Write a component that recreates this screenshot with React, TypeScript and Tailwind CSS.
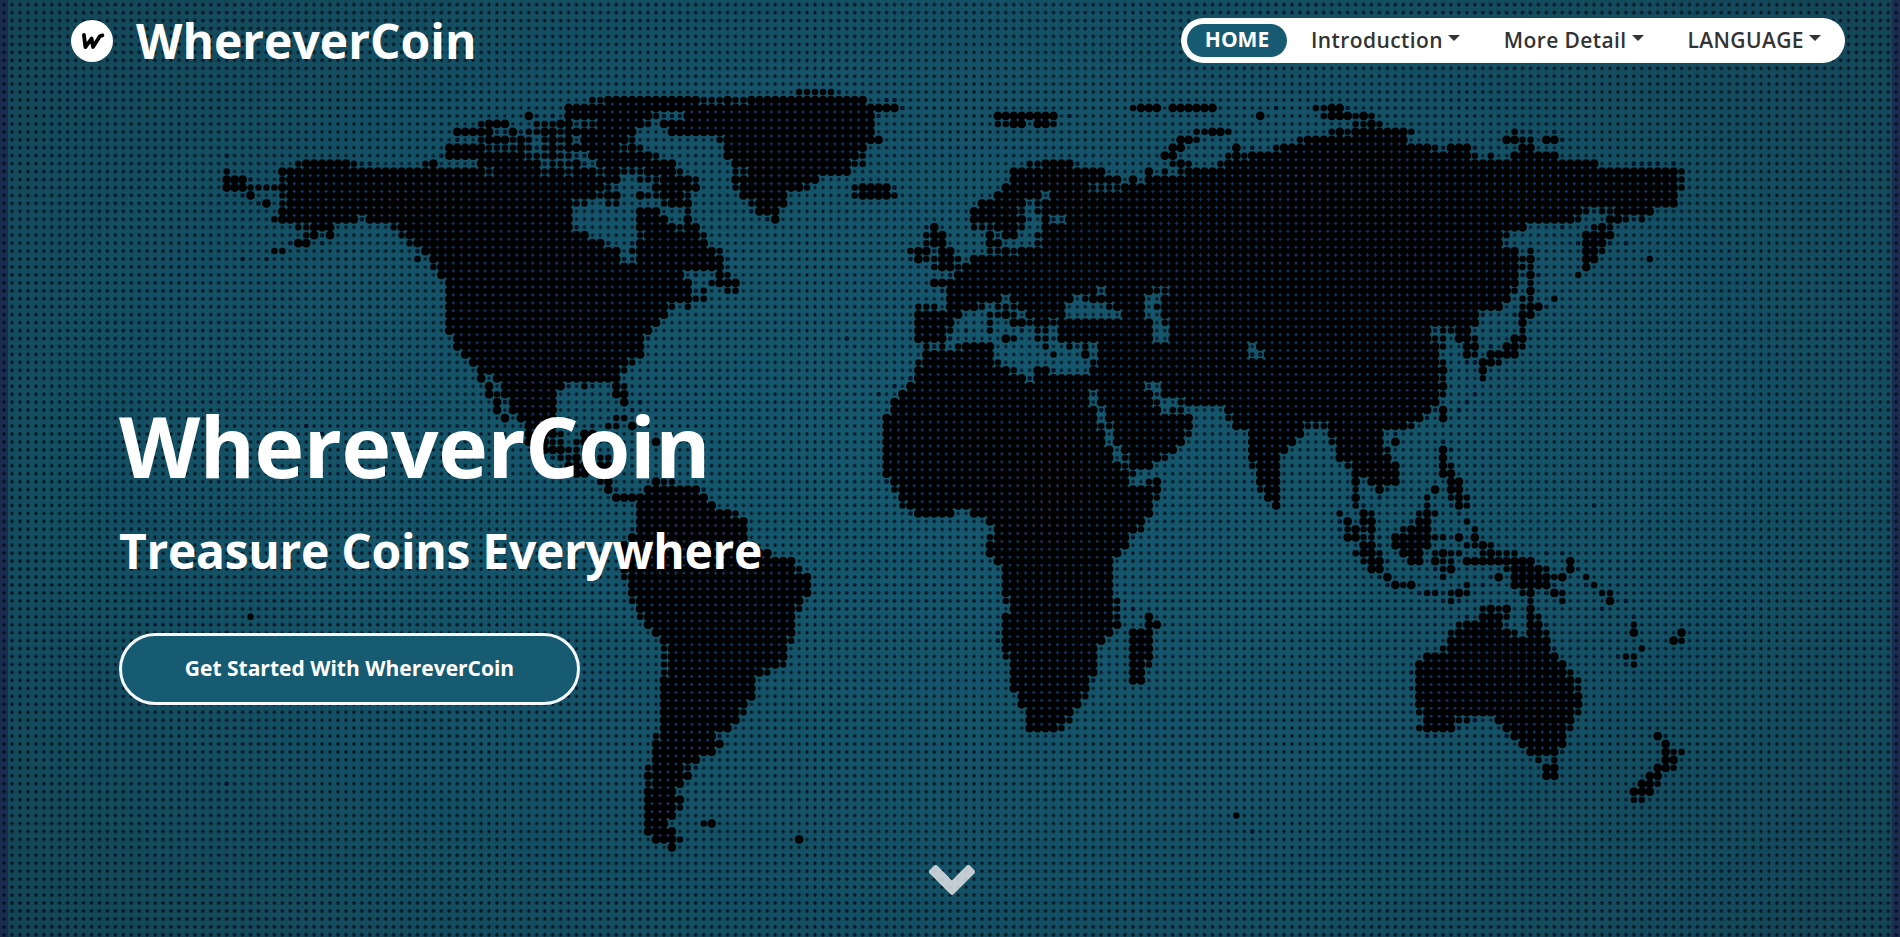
const STEP = 7.95;
const ORIGIN_X = 4.1;
const ORIGIN_Y = 4.65;
const FIRST_ROW = 11;

// One entry per dot row. "a-b" is a run of land dots, the suffix m marks
// medium dots and s marks small ones.
const ROWS = [
  "100-104m 105s",
  "74-75m 76-87 88-90m 91 92-93m 94-108 111-112s",
  "71-109 110-112 113s 142m 143-145 147-152 160s 165-166m 167-168 169s",
  "66 67s 69s 71-81 82m 83-85s 86-109 110s 125-132 134s 158 166m 167-169 170m 171 172m",
  "60m 61-63 67-69m 70-71 72s 73-74m 75-80 81m 83-109 125-126m 127-128 130-131 132m 170-171m 172 173m",
  "57-61 62-63s 64 65s 66-67m 68-69 70m 71-79 84-109 150-151m 152-153 154m 167m 168 169m 170-176 177m 190m 191-192s 195s",
  "57s 60m 61-63 64m 65 66m 68m 69 70m 71 73-78 79m 90m 91-110 148-149 150m 163m 164-176 189-190 191-192m 194-195 196s",
  "56-60 61-64m 65 66m 67s 68m 69 70m 71-77 78m 79 80m 91-108 147-148 155 157s 160m 161-179 180m 181s 182-184 185s 191-192",
  "28s 55s 56-65 66m 67-68m 69 70-71m 72-73s 74-81 82m 91-107 108m 146-147 154m 155 156m 157-184 185m 187m 190-195",
  "37m 38-43 44m 45-46s 53m 54 60-67 68s 69-70m 71m 72 73s 75-84 92-106 107-108m 129-130m 131-134 135s 147m 148 149m 153m 154-200 205-208s 210s",
  "28m 35-60 61m 62-67 68m 69-70 71m 72-74 75m 76-77 78-80m 81-84 85m 92-93m 94-106 127-138 144 146m 148m 149-210 211m",
  "28-30 31s 35m 36-77 80-82m 83-86 87m 92-102 127-140 142 144-210 211m",
  "28-30 31-34m 35-75 76m 77s 82-87 92m 93-100 101m 107m 108-111 112s 126-136 137-140m 141-210 211m",
  "30s 31 35m 36-74 75m 76-77 80 81-82m 83-85 86m 93-98 107m 108-111 112m 125-130 132-210",
  "32s 33 35m 36-71 72-73m 76-77m 83m 84-85 86 94m 95-98 123-128 129s 130m 131-210",
  "35-71 80-82 86m 94s 95-97 122-127 128m 130m 131-198 199m 200s 201-202m 203-207",
  "34m 35-44 45s 46-71 80-83 86 96s 97 122-128 129s 131 132-133s 134-197 198m 202-203 204m 205s 206m",
  "37-38m 39-41 49m 50-71 72s 80-84 85m 86-87 116s 117 122-124m 125-127 128m 131-191 196s 200m 201 202m",
  "38m 39 40s 41 50m 51-73 80m 81-87 88m 116m 117-118 124 125s 126-127 130m 131-188 189m 199-202",
  "36s 37-38 40s 51m 52-75 76s 79s 80-88 116m 117-118 124-125 130m 131-188 189s 198s 199-201 202s 204s",
  "34-35m 52s 53-77 79m 80-89 90m 114m 115-116 117s 118-119 124m 125m 126 127m 128-190 192m 199-200 201m",
  "30s 33s 52m 54-77 78-79s 80-90 91s 114s 115 116-117m 118-119 120m 122-190 191m 192 199-200 207m",
  "54m 55-90 91s 117m 118-119 120m 121-190 191m 192m 199",
  "55-85 87s 90 91m 119s 120-190 191s 192 193s 198m",
  "56-86 89m 90-92 117-190 192m",
  "56-86 87s 88m 91-92m 118s 119-137 138s 139-144 145-146m 147-189 190m 192",
  "56-86 87-88m 119-125 127-134 136m 137-143 146-189 191m 192m 195m",
  "56-83 84m 86m 115-117m 119-122 123m 125-127m 128-133 139m 140-143 145m 146-188 191m 192-193 194s",
  "56-83 115-120 124-125m 126 127m 129-133 141-143 146-185 186s 190s 191-192",
  "56-82 115-119 124m 127-128 129m 130-131 132m 133-144 146m 147-185 191",
  "56-81 115-118 119m 121s 124m 128s 130-131m 133-144 147-179 180s 181-182m 183-184 191m",
  "57-80 81s 106s 115-118 119s 126 127m 130-131m 132s 133-144 147-179 180-181m 183-184 185m 190-191",
  "57-80 116m 117s 118m 120m 121-124 131m 134m 135s 136m 138-156 158-180 181m 184-185 187s 189-190 191m",
  "58-80 116-124 132m 136 138-156 157-158s 159-180 184 185m 187-190",
  "59-78 79m 115m 116-124 125m 137m 138-180 181m 184-185s 186-187 188m",
  "60-77 78m 115-126 127m 130-131 132s 137-181 186",
  "60 62-77 114s 115-128 129s 130-180 181m 186m",
  "61 63-70 71s 73m 74s 77 78m 112s 114-143 144s 146-181",
  "61 62m 63-69 77-78 110s 113-136 137s 138-144 145s 146-180 181m 185s",
  "62 63s 64-69 78 80s 112-136 138-144 145m 148m 149-180 184s",
  "62 64-69 79s 112-137 138s 139-145 147-148m 154-179 180s 181 183s",
  "63 65-69 77-78m 111-137 139-149 154m 155-178 179s 181",
  "38s 66-69 74s 76-77m 79 111-137 138-139m 140-149 155-163 164-166m 167-176 177m",
  "40s 66-69 70m 73-74 111-138 140-148 149m 157-163 167-173 175s",
  "66-68 69-70m 72m 73-74 82 111-138 140-148 157-162 167m 168-173 175 181s",
  "67-70 71-73m 111-139 141-147 157-161 168-173 174m 181 182s",
  "69s 70-71m 72 75-76m 111-139 141m 142-145 146m 157-160 168-169 170-174 181",
  "71-73 75-76 111-140 141m 142-144 157m 158-160 169m 170-175 181 182m",
  "72-73 75-76 111-141 142m 158-160 170-175 181-182",
  "75m 76 82 83-84m 111s 112-141 144m 145 158-160 170 172-175 182-183",
  "76 77s 81-87 88s 112m 113-145 158m 159-160 170m 173 174s 180 182-183",
  "77-87 88 113-144 145m 159-160 170 173s 179m 182m 183 184m",
  "80-89 113m 114-144 160 170m 171s 179m 182s 183 184m 200s",
  "80-91 92m 114s 115-119 122-144 168m 171 172m 178m 179 180m 183s",
  "80-93 124-143 168s 169 171-172 177s 178-179 184m",
  "79s 80-93 125-142 143m 168s 169m 170 171m 172 176m 177-179 185m",
  "79-93 124m 125-141 142s 169-170 171-172m 173s 175-179 180-181m 182s 183 185",
  "78-94 124-140 141 171-172 173s 175-179 184-185m 186 187m",
  "78-96 124-140 170m 171-172 173m 176-178 180m 181 182-183m 186m 187 188-190m 194s 196s",
  "78-99 125-139 171m 172-173 174s 177-178 180 181-182m 184-192 197",
  "78-99 100m 126-139 172-173 180s 181m 182 189m 190-193 194m 197 198s",
  "78m 79-101 126-139 173s 174 181m 187s 188 190-194 195m 196 199m",
  "79-101 126-139 174s 175 176m 177 184m 186s 190-194 195s 199s 200m",
  "79-101 126-139 178s 179m 180m 181s 182m 183 184m 191m 192 194s 195 196m 201-202m",
  "79m 80-100 126m 127-139 140m 181s 182m 183s 192m 196m 202 204s",
  "80-99 100m 127-139 140m 142s 186m 187 188m 189 192 201s",
  "31m 80m 81-99 126-139 140m 144 184s 186-188 189m 192 193m 205s",
  "81-99 126-139 140 144-145 183m 184-188 189s 192-193 194s 205m",
  "28s 82-99 125s 126-139 142-144 182m 183-189 190m 192-193 194m 205 211",
  "83-98 99m 125s 126-138 142-144 182-194 210 211m",
  "83m 84-98 126-137 142-144 181m 182-194 195s 206m",
  "83m 84-98 126m 127-137 142-144 179-195 203s 204-205m",
  "83m 84-97 98m 127-137 142-143 144m 178-196 204s 205m",
  "83m 84-95 96m 127-137 142-143 177s 178-196 197m",
  "83-94 127-136 137s 142-143 178-197 198m",
  "83-94 127-136 177s 178-197 198m",
  "83-94 128-135 136m 178-198",
  "83-93 128-135 178-198",
  "83-92 93m 129-134 178m 179-197 198m",
  "83-92 129-133 134m 179-182 183m 184m 185s 188-197",
  "83-91 129-132 133m 178m 179-182 183s 189-196 197m",
  "82m 83-89 90s 179-180s 189s 190-196 208 209s",
  "82-89 90 191-196 209",
  "82-89 192-195 196s 209 210-211m",
  "82-87 193m 195m 209-210",
  "81m 82-85 86m 87s 194-195 208-209 210m",
  "81-85 86 194-195 207-208",
  "28s 81m 82-85 206-207 208m",
  "81-84 205-207",
  "81-84 85 205-206m",
  "81-84 85m",
  "81-84 155m",
  "81-83 88m 89",
  "81-84 157s",
  "82-84 85m 100",
  "84",
];

type Size = "l" | "m" | "s";

function buildMap() {
  const paths: Record<Size, string> = { l: "", m: "", s: "" };
  const large = new Set<string>();
  ROWS.forEach((row, i) => {
    const r = i + FIRST_ROW;
    const y = (ORIGIN_Y + r * STEP).toFixed(2);
    for (const [, from, to, kind] of row.matchAll(/(\d+)(?:-(\d+))?([ms]?)/g)) {
      const size: Size = kind === "m" || kind === "s" ? kind : "l";
      for (let c = +from; c <= +(to ?? from); c++) {
        paths[size] += `M${(ORIGIN_X + c * STEP).toFixed(2)} ${y}h0`;
        if (size === "l") large.add(`${c},${r}`);
      }
    }
  });
  let gaps = "";
  large.forEach((key) => {
    const [c, r] = key.split(",").map(Number);
    if (large.has(`${c + 1},${r}`) && large.has(`${c},${r + 1}`) && large.has(`${c + 1},${r + 1}`)) {
      gaps += `M${(ORIGIN_X + (c + 0.5) * STEP).toFixed(2)} ${(ORIGIN_Y + (r + 0.5) * STEP).toFixed(2)}h0`;
    }
  });
  return { ...paths, gaps };
}

const MAP = buildMap();

function DottedMap() {
  return (
    <svg className="absolute inset-0 h-full w-full" viewBox="0 0 1900 937" fill="none" strokeLinecap="round" aria-hidden="true">
      <defs>
        <pattern id="dots" width={STEP} height={STEP} patternUnits="userSpaceOnUse" x={ORIGIN_X - STEP / 2} y={ORIGIN_Y - STEP / 2}>
          <rect x="2.2" y="2.2" width="3.5" height="3.5" rx="1.2" fill="#04101e" fillOpacity="0.3" />
          <rect x="2.6" y="2.6" width="2.75" height="2.75" rx="0.6" fill="#020a14" fillOpacity="0.8" />
        </pattern>
      </defs>
      <rect width="1900" height="937" fill="url(#dots)" />
      <path d={MAP.gaps} stroke="#11335a" strokeWidth="5" />
      <path d={MAP.s} stroke="#031226" strokeWidth="4.6" />
      <path d={MAP.m} stroke="#02101f" strokeOpacity="0.6" strokeWidth="7" />
      <path d={MAP.m} stroke="#000" strokeWidth="6" />
      <path d={MAP.l} stroke="#000" strokeWidth="8.8" />
    </svg>
  );
}

function Caret() {
  return <span className="mb-[4px] ml-[5px] inline-block border-x-[6.5px] border-t-[6.5px] border-x-transparent border-t-[#333] align-middle" />;
}

function NavItem({ label }: { label: string }) {
  return (
    <a href="#" className="flex items-center whitespace-nowrap text-[21px] font-semibold leading-[30px] tracking-[0.4px] text-[#333]">
      {label}
      <Caret />
    </a>
  );
}

export default function App() {
  return (
    <div className="relative h-[937px] w-full overflow-hidden bg-[radial-gradient(ellipse_75%_85%_at_50%_48%,#15586e_0%,#145368_45%,#13495a_80%,#133e4c_100%)] font-['Open_Sans',sans-serif] text-white">
      <div className="absolute inset-y-0 left-0 w-[8px] bg-[#1a2c50]" />
      <div className="absolute inset-y-0 right-0 w-[8px] bg-[#1a2c50]" />
      <DottedMap />

      <div className="relative flex h-full flex-col">
        <header className="flex h-[82px] items-center justify-between pl-[71px] pr-[55px]">
          <a href="#" className="flex items-center gap-[23px]">
            <svg width="42" height="42" viewBox="0 0 42 42" fill="none">
              <circle cx="21" cy="21" r="21" fill="#fff" />
              <path d="M12.9 14.8 14.4 27 20.6 18.6 22 27 28.8 16.2 31.4 15.4" stroke="#000" strokeWidth="3.8" strokeLinecap="round" strokeLinejoin="round" />
            </svg>
            <span className="text-[48px] font-bold leading-[60px]">WhereverCoin</span>
          </a>
          <nav className="mb-[2px] flex h-[45px] w-[664px] items-center rounded-full bg-white pl-[6px]">
            <a href="#" className="mr-[24px] flex h-[33px] w-[100px] items-center justify-center rounded-full bg-[#175b72] text-[21px] font-bold">
              HOME
            </a>
            <div className="flex flex-1 items-center justify-between pr-[24px]">
              <NavItem label="Introduction" />
              <NavItem label="More Detail" />
              <NavItem label="LANGUAGE" />
            </div>
          </nav>
        </header>

        <main className="flex flex-col items-start pl-[119px] pt-[306px]">
          <h1 className="text-[84px] font-bold leading-[116px] tracking-[-0.4px]">WhereverCoin</h1>
          <h2 className="mt-[14px] text-[48px] font-bold leading-[66px] tracking-[-0.3px]">Treasure Coins Everywhere</h2>
          <button className="mt-[49px] flex h-[72px] w-[461px] items-center justify-center rounded-full border-[3px] border-[#f5f8fd] bg-[#175b72] text-[21px] font-bold">
            Get Started With WhereverCoin
          </button>
        </main>

        <a href="#" aria-label="Scroll down" className="mx-auto mb-[41px] mt-auto pl-[3px] text-[#eeedf0] opacity-80">
          <svg width="48" height="32" viewBox="0 0 48 32" className="block">
            <path
              d="M3.5 7.8 7.7 3.6 24 19.9 40.3 3.6 44.5 7.8 24 28.3Z"
              fill="currentColor"
              stroke="currentColor"
              strokeWidth="5"
              strokeLinejoin="round"
            />
          </svg>
        </a>
      </div>
    </div>
  );
}
